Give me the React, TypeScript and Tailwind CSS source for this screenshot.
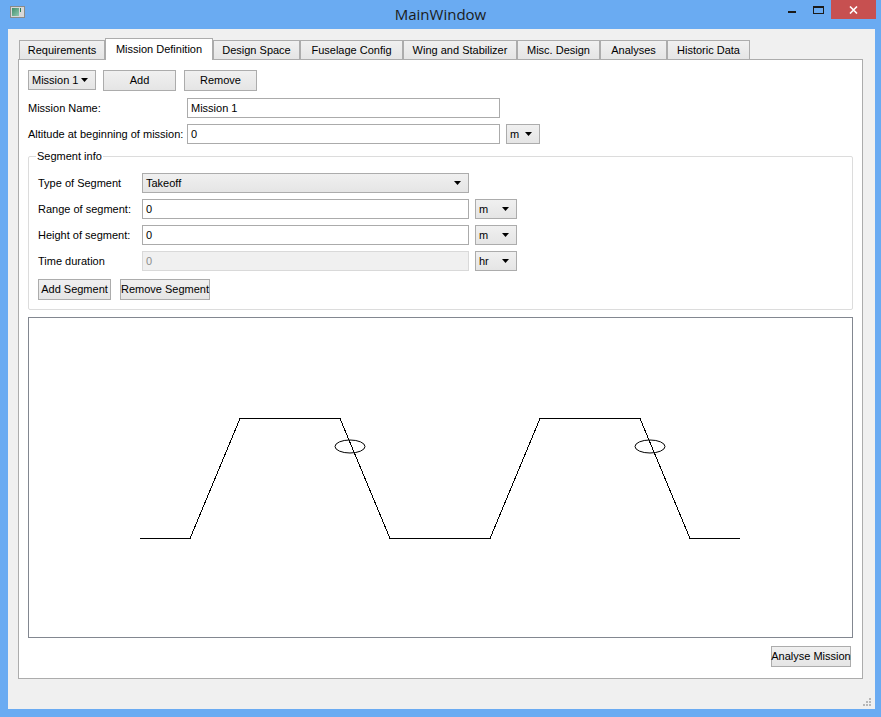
import React from "react";

const tabs = [
  { label: "Requirements", w: "w-[86px]" },
  { label: "Mission Definition", w: "w-[108px]", active: true },
  { label: "Design Space", w: "w-[87px]" },
  { label: "Fuselage Config", w: "w-[103px]" },
  { label: "Wing and Stabilizer", w: "w-[114px]" },
  { label: "Misc. Design", w: "w-[83px]" },
  { label: "Analyses", w: "w-[67px]" },
  { label: "Historic Data", w: "w-[83px]" },
];

function Arrow() {
  return (
    <svg width="7" height="4" viewBox="0 0 7 4" className="shrink-0">
      <path d="M0 0H7L3.5 4Z" fill="#000" />
    </svg>
  );
}

function Combo({ value, className }: { value: string; className: string }) {
  return (
    <div
      className={`flex items-center justify-between whitespace-nowrap border border-[#acacac] bg-gradient-to-b from-[#f0f0f0] to-[#e5e5e5] pl-[3px] pr-[7px] ${className}`}
    >
      <span>{value}</span>
      <Arrow />
    </div>
  );
}

function Button({ label, className }: { label: string; className: string }) {
  return (
    <div
      className={`flex items-center justify-center whitespace-nowrap border border-[#acacac] bg-gradient-to-b from-[#f0f0f0] to-[#e5e5e5] ${className}`}
    >
      {label}
    </div>
  );
}

function Input({ value, className, disabled }: { value: string; className: string; disabled?: boolean }) {
  return (
    <div
      className={`flex items-center pl-[3px] border ${
        disabled ? "border-[#d9d9d9] bg-[#f0f0f0] text-[#8d8d8d]" : "border-[#ababab] bg-white"
      } ${className}`}
    >
      {value}
    </div>
  );
}

function MissionChart() {
  const pts = "140,537.5 190,537.5 240,417.5 340,417.5 390,537.5 490,537.5 540,417.5 640,417.5 690,537.5 740,537.5";
  return (
    <svg width="823" height="319" viewBox="29 317 823 319" className="block">
      <polyline points={pts} fill="none" stroke="#000" strokeWidth="1" shapeRendering="crispEdges" />
      <ellipse cx="350" cy="445.5" rx="15" ry="6.5" fill="none" stroke="#000" strokeWidth="1" />
      <ellipse cx="650" cy="445.5" rx="15" ry="6.5" fill="none" stroke="#000" strokeWidth="1" />
    </svg>
  );
}

export default function App() {
  return (
    <div className="w-[881px] h-[717px] bg-[#6aabf2] flex flex-col font-['Liberation_Sans',Arial,sans-serif] text-[11px] text-black">
      {/* title bar */}
      <div className="h-[29px] grid grid-cols-[1fr_auto_1fr] shrink-0">
        <div className="pl-[10px] pt-[6px]">
          <div className="w-[15px] h-[12px] bg-[#d8d8d8] border border-[#8a8a8a] flex p-[1px] gap-[1px]">
            <div className="w-[7px] h-full bg-gradient-to-br from-[#3e8f6e] to-[#8fc8b0]" />
            <div className="w-[1px] h-[4px] bg-[#2a7d5a]" />
          </div>
        </div>
        <div className="pt-[4px] text-[15px] font-['Open_Sans',sans-serif] text-[#1b1b1b] leading-[20px]">
          MainWindow
        </div>
        <div className="flex justify-end pr-[5px]">
          <div className="w-[26px] flex justify-center pt-[11px]">
            <div className="w-[8px] h-[2px] bg-[#1b1b1b]" />
          </div>
          <div className="w-[26px] flex justify-center pt-[6px]">
            <div className="w-[11px] h-[8px] border border-t-2 border-[#1b1b1b]" />
          </div>
          <div className="w-[45px] h-[19px] bg-[#c75050] flex items-center justify-center">
            <svg width="9" height="8" viewBox="0 0 9 8">
              <path d="M1 0.5L8 7.5M8 0.5L1 7.5" stroke="#fff" strokeWidth="1.6" />
            </svg>
          </div>
        </div>
      </div>

      {/* client area */}
      <div className="relative ml-[8px] mr-[6px] mb-[8px] flex-1 bg-[#f0f0f0] pl-[10px] pt-[9px] flex flex-col">
        <div className="h-[21px] flex items-end pl-[1px]">
          {tabs.map((t) =>
            t.active ? (
              <div
                key={t.label}
                className={`${t.w} h-[22px] -mb-[1px] relative z-10 bg-white border border-b-0 border-[#acacac] flex items-center justify-center whitespace-nowrap pb-[1px]`}
              >
                {t.label}
              </div>
            ) : (
              <div
                key={t.label}
                className={`${t.w} h-[19px] border border-b-0 border-[#acacac] bg-gradient-to-b from-[#f0f0f0] to-[#e5e5e5] flex items-center justify-center whitespace-nowrap`}
              >
                {t.label}
              </div>
            )
          )}
        </div>

        <div className="w-[845px] h-[620px] border border-[#acacac] bg-white pt-[10px] px-[9px] flex flex-col">
          <div className="flex items-start h-[21px]">
            <Combo value="Mission 1" className="w-[68px] h-[20px]" />
            <Button label="Add" className="w-[73px] h-[21px] ml-[7px]" />
            <Button label="Remove" className="w-[73px] h-[21px] ml-[8px]" />
          </div>

          <div className="flex items-center mt-[7px] h-[20px]">
            <div className="w-[159px]">Mission Name:</div>
            <Input value="Mission 1" className="w-[313px] h-[20px]" />
          </div>

          <div className="flex items-center mt-[6px] h-[20px]">
            <div className="w-[159px] whitespace-nowrap">Altitude at beginning of mission:</div>
            <Input value="0" className="w-[313px] h-[20px]" />
            <Combo value="m" className="w-[34px] h-[20px] ml-[6px]" />
          </div>

          {/* Segment info group */}
          <div className="relative mt-[12px] border border-[#dcdcdc] rounded-[2px] pt-[16px] pl-[9px] pb-[9px] flex flex-col gap-[6px]">
            <div className="absolute -top-[7px] left-[7px] bg-white px-[1px] leading-[13px]">Segment info</div>
            <div className="flex items-center h-[20px]">
              <div className="w-[104px]">Type of Segment</div>
              <Combo value="Takeoff" className="w-[327px] h-[20px]" />
            </div>
            <div className="flex items-center h-[20px]">
              <div className="w-[104px]">Range of segment:</div>
              <Input value="0" className="w-[327px] h-[20px]" />
              <Combo value="m" className="w-[42px] h-[20px] ml-[6px]" />
            </div>
            <div className="flex items-center h-[20px]">
              <div className="w-[104px]">Height of segment:</div>
              <Input value="0" className="w-[327px] h-[20px]" />
              <Combo value="m" className="w-[42px] h-[20px] ml-[6px]" />
            </div>
            <div className="flex items-center h-[20px]">
              <div className="w-[104px]">Time duration</div>
              <Input value="0" disabled className="w-[327px] h-[20px]" />
              <Combo value="hr" className="w-[42px] h-[20px] ml-[6px]" />
            </div>
            <div className="flex items-center mt-[2px] h-[21px]">
              <Button label="Add Segment" className="w-[73px] h-[21px]" />
              <Button label="Remove Segment" className="w-[90px] h-[21px] ml-[9px]" />
            </div>
          </div>

          {/* mission profile view */}
          <div className="mt-[7px] h-[321px] border border-[#828790] bg-white">
            <MissionChart />
          </div>

          <div className="flex justify-end mt-[8px] pr-[2px]">
            <Button label="Analyse Mission" className="w-[80px] h-[21px]" />
          </div>
        </div>

        {/* size grip */}
        <svg width="9" height="9" viewBox="0 0 9 9" className="absolute right-[3px] bottom-[2px]">
          <g fill="#b7b7b7">
            <rect x="6" y="0" width="2" height="2" />
            <rect x="3" y="3" width="2" height="2" />
            <rect x="6" y="3" width="2" height="2" />
            <rect x="0" y="6" width="2" height="2" />
            <rect x="3" y="6" width="2" height="2" />
            <rect x="6" y="6" width="2" height="2" />
          </g>
        </svg>
      </div>
    </div>
  );
}
